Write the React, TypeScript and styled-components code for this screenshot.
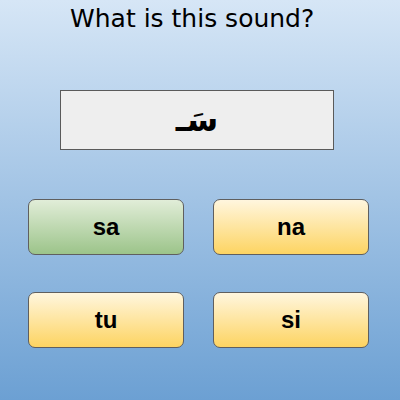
import React from "react";
import styled, { createGlobalStyle } from "styled-components";

const Global = createGlobalStyle`
  html, body { margin: 0; padding: 0; }
  body { width: 400px; height: 400px; overflow: hidden; }
`;

const Page = styled.div`
  width: 400px;
  height: 400px;
  box-sizing: border-box;
  background: linear-gradient(to bottom, #d6e6f6 0%, #6ca0d3 100%);
  display: flex;
  flex-direction: column;
`;

const Title = styled.h1`
  margin: 0;
  padding: 3px 0 0 70px;
  height: 46px;
  box-sizing: border-box;
  font-family: "Comic Sans MS", "DejaVu Sans", sans-serif;
  font-weight: normal;
  font-size: 25px;
  line-height: 32px;
  color: #000;
  white-space: nowrap;
`;

const Prompt = styled.div`
  margin: 44px 0 0 60px;
  width: 274px;
  height: 60px;
  box-sizing: border-box;
  background: #eeeeee;
  border: 1px solid #5a5a5a;
  display: flex;
  align-items: center;
  justify-content: center;
  font-family: "DejaVu Sans", sans-serif;
  font-size: 32px;
  font-weight: bold;
  padding-left: 0px;
  direction: rtl;
`;

const Grid = styled.div`
  margin: 49px 0 0 28px;
  display: grid;
  grid-template-columns: 156px 156px;
  grid-auto-rows: 56px;
  column-gap: 29px;
  row-gap: 37px;
`;

const Choice = styled.div<{ $correct?: boolean }>`
  box-sizing: border-box;
  border: 1px solid #5f5f5f;
  border-radius: 7px;
  background: ${(p) =>
    p.$correct
      ? "linear-gradient(to bottom, #e1edd8 0%, #9cc48a 100%)"
      : "linear-gradient(to bottom, #fff6de 0%, #fdd462 100%)"};
  display: flex;
  align-items: center;
  justify-content: center;
  font-family: "Liberation Sans", Arial, sans-serif;
  font-weight: bold;
  font-size: 24px;
  color: #000;
`;

export default function App() {
  return (
    <>
      <Global />
      <Page>
        <Title>What is this sound?</Title>
        <Prompt>سَـ</Prompt>
        <Grid>
          <Choice $correct>sa</Choice>
          <Choice>na</Choice>
          <Choice>tu</Choice>
          <Choice>si</Choice>
        </Grid>
      </Page>
    </>
  );
}
